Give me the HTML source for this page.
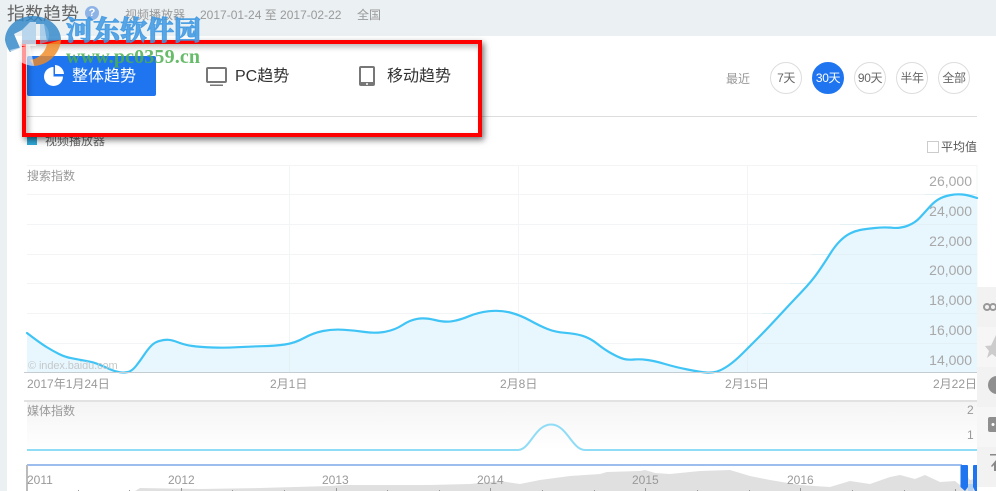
<!DOCTYPE html>
<html lang="zh"><head><meta charset="utf-8"><title>指数趋势</title>
<style>
html,body{margin:0;padding:0;background:#fff}
#p{position:relative;width:996px;height:491px;overflow:hidden;background:#fff;font-family:"Liberation Sans","Noto Sans CJK SC",sans-serif;font-size:12px;color:#999}
#p div,#p span.a{position:absolute;white-space:nowrap}
.t{line-height:16px}
.c{width:30px;height:30px;border:1px solid #ddd;border-radius:50%;top:62px;text-align:center;line-height:30px;color:#666;background:#fff;letter-spacing:-.4px}
.y{right:24px;font-size:14px;line-height:16px;color:#a8a8a8;text-align:right}
svg{position:absolute;left:0;top:0}
</style></head><body><div id="p">
<div style="left:0;top:0;width:7px;height:491px;background:#ebf0f3"></div>
<div style="left:0;top:0;width:996px;height:36px;background:#ebf0f3"></div>
<div style="left:7px;top:2px;font-size:18px;line-height:24px;color:#666">指数趋势</div>
<div style="left:85px;top:6px;width:14px;height:14px;border-radius:50%;background:#8db3e6;color:#fff;font-size:11px;font-weight:bold;line-height:14px;text-align:center">?</div>
<div class="t" style="left:125px;top:7px">视频播放器</div>
<div class="t" style="left:200px;top:7px">2017-01-24 至 2017-02-22</div>
<div class="t" style="left:357px;top:7px">全国</div>

<div style="left:27px;top:56px;width:129px;height:40px;background:#1f75f0;border-radius:2px"></div>
<div style="left:72px;top:66px;font-size:16px;line-height:22px;color:#fff">整体趋势</div>
<div style="left:235px;top:66px;font-size:16px;line-height:22px;color:#333">PC趋势</div>
<div style="left:387px;top:66px;font-size:16px;line-height:22px;color:#333">移动趋势</div>
<div style="left:27px;top:116px;width:950px;height:1px;background:#ddd"></div>
<div class="t" style="left:726px;top:71px">最近</div>
<div class="c" style="left:770px">7天</div>
<div class="c" style="left:812px;background:#1f75f0;border-color:#1f75f0;color:#fff">30天</div>
<div class="c" style="left:854px">90天</div>
<div class="c" style="left:896px">半年</div>
<div class="c" style="left:938px">全部</div>

<div style="left:27px;top:137px;width:10px;height:8px;background:#2fa8d8"></div>
<div class="t" style="left:45px;top:133px;color:#666">视频播放器</div>
<div style="left:927px;top:141px;width:10px;height:10px;border:1px solid #ccc"></div>
<div class="t" style="left:941px;top:139px;color:#555">平均值</div>

<svg width="996" height="491" viewBox="0 0 996 491">
<path d="M53.500 67V76.500H63A9.500 9.500 0 1 1 53.500 67Z M55 65A9.500 9.500 0 0 1 64 74H55Z" fill="#fff"/>
<g fill="none" stroke="#777" stroke-width="2"><rect x="207" y="68" width="19" height="14" rx="1"/></g>
<rect x="210" y="84.500" width="13" height="1.500" fill="#777"/>
<rect x="359" y="66" width="16" height="20" rx="2" fill="#777"/><rect x="361" y="68" width="12" height="14" fill="#fff"/><circle cx="367" cy="84" r="1" fill="#fff"/>

<g stroke="#f3f4f5" stroke-width="1" fill="none">
<path d="M27 165.500H977M27 194.500H977M27 224.500H977M27 254.500H977M27 283.500H977M27 313.500H977M27 343.500H977M289.500 165V372M518.500 165V372M747.500 165V372M977 165V372"/>
</g>
<path fill="#e8f7fe" d="M27 333 Q40 343 46.5 347 Q53 351 59 354 Q65 357 71.5 358.2 Q78 359.5 85.5 360.8 Q93 362 99 364.5 Q105 367 110 369.2 Q115 371.5 119.5 372.2 Q124 373 128 372 Q132 371 136 366 Q140 361 144 355 Q148 349 151.5 345.5 Q155 342 160 340.8 Q165 339.5 168.5 339.8 Q172 340 178.5 342.5 Q185 345 192.5 346 Q200 347 212.5 347.5 Q225 348 237.5 347.2 Q250 346.5 262.5 346.2 Q275 346 285 344.5 Q295 343 304 338 Q313 333 323 331 Q333 329 344 329.8 Q355 330.5 365 332 Q375 333.5 385 331.8 Q395 330 402.5 325 Q410 320 417.5 318.8 Q425 317.5 435 320 Q445 322.5 452.5 321.2 Q460 320 469 316.2 Q478 312.5 489 311.2 Q500 310 510 312.5 Q520 315 530 320.5 Q540 326 547.5 329 Q555 332 565 332.8 Q575 333.5 582.5 335.8 Q590 338 597.5 344 Q605 350 612.5 354 Q620 358 624 359 Q628 360 634 359.5 Q640 359 647.5 360 Q655 361 665 364 Q675 367 687.5 369.5 Q700 372 706 372.5 Q712 373 717 371.5 Q722 370 728.5 365.5 Q735 361 742.5 353.5 Q750 346 758.5 337.5 Q767 329 778.5 316.5 Q790 304 801 292.5 Q812 281 818.5 271.5 Q825 262 830 254 Q835 246 840 241 Q845 236 850 233.5 Q855 231 860 230 Q865 229 875 228 Q885 227 892.5 227.8 Q900 228.5 907.5 225.8 Q915 223 920 217.5 Q925 212 930 206.5 Q935 201 940 198.5 Q945 196 951 195 Q957 194 962.5 194.5 Q968 195 977 198 L977 372 L27 372Z"/>
<g stroke="#e3f0f6" fill="none"><path d="M289.500 344V372M518.500 317V372M747.500 345V372M285 343.500H298M750 343.500H977M762 313.500H977M790 283.500H977M812 254.500H977M840 224.500H977M925 194.500H977"/></g>
<path fill="none" stroke="#3fc4f5" stroke-width="2.200" stroke-linecap="round" d="M27 333 Q40 343 46.5 347 Q53 351 59 354 Q65 357 71.5 358.2 Q78 359.5 85.5 360.8 Q93 362 99 364.5 Q105 367 110 369.2 Q115 371.5 119.5 372.2 Q124 373 128 372 Q132 371 136 366 Q140 361 144 355 Q148 349 151.5 345.5 Q155 342 160 340.8 Q165 339.5 168.5 339.8 Q172 340 178.5 342.5 Q185 345 192.5 346 Q200 347 212.5 347.5 Q225 348 237.5 347.2 Q250 346.5 262.5 346.2 Q275 346 285 344.5 Q295 343 304 338 Q313 333 323 331 Q333 329 344 329.8 Q355 330.5 365 332 Q375 333.5 385 331.8 Q395 330 402.5 325 Q410 320 417.5 318.8 Q425 317.5 435 320 Q445 322.5 452.5 321.2 Q460 320 469 316.2 Q478 312.5 489 311.2 Q500 310 510 312.5 Q520 315 530 320.5 Q540 326 547.5 329 Q555 332 565 332.8 Q575 333.5 582.5 335.8 Q590 338 597.5 344 Q605 350 612.5 354 Q620 358 624 359 Q628 360 634 359.5 Q640 359 647.5 360 Q655 361 665 364 Q675 367 687.5 369.5 Q700 372 706 372.5 Q712 373 717 371.5 Q722 370 728.5 365.5 Q735 361 742.5 353.5 Q750 346 758.5 337.5 Q767 329 778.5 316.5 Q790 304 801 292.5 Q812 281 818.5 271.5 Q825 262 830 254 Q835 246 840 241 Q845 236 850 233.5 Q855 231 860 230 Q865 229 875 228 Q885 227 892.5 227.8 Q900 228.5 907.5 225.8 Q915 223 920 217.5 Q925 212 930 206.5 Q935 201 940 198.5 Q945 196 951 195 Q957 194 962.5 194.5 Q968 195 977 198"/>
<rect x="24" y="372" width="953" height="1" fill="#c5cdd3"/>

<defs><linearGradient id="g" x1="0" y1="0" x2="0" y2="1"><stop offset="0" stop-color="#f4f4f4"/><stop offset="1" stop-color="#fff"/></linearGradient></defs>
<rect x="27" y="401" width="950" height="49" fill="url(#g)"/>
<rect x="24" y="400" width="953" height="2" fill="#e2e2e2"/>
<path fill="none" stroke="#8fdcf6" stroke-width="2" d="M27 450L518 450C530 450 535 424.500 551 424.500C567 424.500 572 450 585 450L977 450"/>

<path fill="#e0e0e0" d="M135 491L140 488L200 489L260 488L330 486L345 485L400 485L430 485L470 484L500 481L520 484L540 480L570 476L600 474L607 472L640 471L645 470L655 473L670 474L700 471L730 470L750 476L770 480L800 485L830 487L850 481L870 484L890 477L900 475L915 479L925 475L940 482L955 481L960 485L965 473L970 480L977 478L977 491Z"/>
<rect x="27" y="464" width="935" height="2" fill="#9dbdee"/>
<rect x="26" y="465" width="2" height="26" fill="#bbb"/>
<g stroke="#999" stroke-width="1"><path d="M181.500 488V491M336.500 488V491M490.500 488V491M645.500 488V491M800.500 488V491M78.500 490V491M129.500 490V491M232.500 490V491M284.500 490V491M387.500 490V491M439.500 490V491M542.500 490V491M594.500 490V491M697.500 490V491M749.500 490V491M852.500 490V491M904.500 490V491M955.500 489V491"/></g>
<rect x="968" y="484" width="5" height="7" fill="#b5d3f0"/>
<path fill="#1f75f0" d="M962 465H967Q968 465 968 466V487L965 491L960.500 487V466Q960.500 465 962 465Z"/>
<path fill="#1f75f0" d="M974 465H977V491H975L973 487V466Q973 465 974 465Z"/>
</svg>

<div class="y" style="top:173px">26,000</div>
<div class="y" style="top:203px">24,000</div>
<div class="y" style="top:233px">22,000</div>
<div class="y" style="top:262px">20,000</div>
<div class="y" style="top:292px">18,000</div>
<div class="y" style="top:322px">16,000</div>
<div class="y" style="top:352px">14,000</div>
<div class="t" style="left:27px;top:168px">搜索指数</div>
<div class="t" style="left:28px;top:358px;color:#c4c8ca;font-size:11px;letter-spacing:-.1px">© index.baidu.com</div>
<div class="t" style="left:27px;top:376px">2017年1月24日</div>
<div class="t" style="left:270px;top:376px">2月1日</div>
<div class="t" style="left:500px;top:376px">2月8日</div>
<div class="t" style="left:725px;top:376px">2月15日</div>
<div class="t" style="left:933px;top:376px">2月22日</div>
<div class="t" style="left:27px;top:403px">媒体指数</div>
<div class="t" style="left:967px;top:402px">2</div>
<div class="t" style="left:967px;top:427px">1</div>
<div class="t" style="left:27px;top:472px">2011</div>
<div class="t" style="left:168px;top:472px">2012</div>
<div class="t" style="left:322px;top:472px">2013</div>
<div class="t" style="left:477px;top:472px">2014</div>
<div class="t" style="left:632px;top:472px">2015</div>
<div class="t" style="left:787px;top:472px">2016</div>

<div style="left:977px;top:287px;width:19px;height:200px;background:#f6f6f6"></div>
<div style="left:977px;top:287px;width:19px;height:40px;background:#f2f2f2"></div>
<div style="left:977px;top:367px;width:19px;height:40px;background:#f2f2f2"></div>
<div style="left:977px;top:447px;width:19px;height:40px;background:#f2f2f2"></div>
<svg width="996" height="491" viewBox="0 0 996 491">
<g fill="none" stroke="#999" stroke-width="2"><circle cx="987" cy="307" r="3"/><circle cx="993" cy="307" r="3"/></g>
<path fill="#ccc" d="M996 335V357L992 354L987 358L989 351L985 346L991 345.500Z"/>
<circle cx="997" cy="385" r="9" fill="#8f8f8f"/>
<rect x="988" y="417" width="14" height="15" rx="2" fill="#8f8f8f"/><circle cx="993" cy="424.500" r="1.500" fill="#fff"/>
<rect x="990" y="454" width="6" height="1.500" fill="#888"/>
<path fill="#888" d="M991 466L996 460V471H994V465L992 467Z"/>
</svg>

<div style="left:22px;top:40px;width:452px;height:89px;border:4px solid #f00;box-shadow:2px 3px 6px rgba(0,0,0,.55),inset 3px 3px 6px rgba(0,0,0,.28)"></div>

<svg width="996" height="491" viewBox="0 0 996 491">
<path fill="#2f86c8" fill-opacity=".82" d="M5 40A28 24 0 0 1 61 40L47 42L44 24H36V44H22V30L14 34L20 48L10 52A28 28 0 0 1 5 40Z"/>
<path fill="#fff" fill-opacity=".6" d="M22 30L30 22H36V46H22Z"/>
<path fill="#7fb8e2" fill-opacity=".6" d="M44 24A14 14 0 0 1 47 42L40 44V24Z"/>
<path fill="#f08a24" fill-opacity=".82" d="M61 40A29 29 0 0 1 34 66L30 60A20 20 0 0 0 47 44Z"/>
<path fill="#fff" fill-opacity=".6" d="M10 50L30 45L34 66A28 28 0 0 1 10 50Z"/>
</svg>
<div style="left:66px;top:11px;font-family:'Noto Serif CJK SC','Liberation Serif',serif;font-weight:900;font-size:27px;line-height:36px;color:rgba(62,152,226,.85);-webkit-text-stroke:.9px rgba(62,152,226,.85)">河东软件园</div>
<div style="left:66px;top:45px;font-family:'Liberation Serif',serif;font-weight:bold;font-size:20px;line-height:24px;letter-spacing:.15px;color:rgba(76,175,80,.85)">www.pc0359.cn</div>
</div></body></html>
